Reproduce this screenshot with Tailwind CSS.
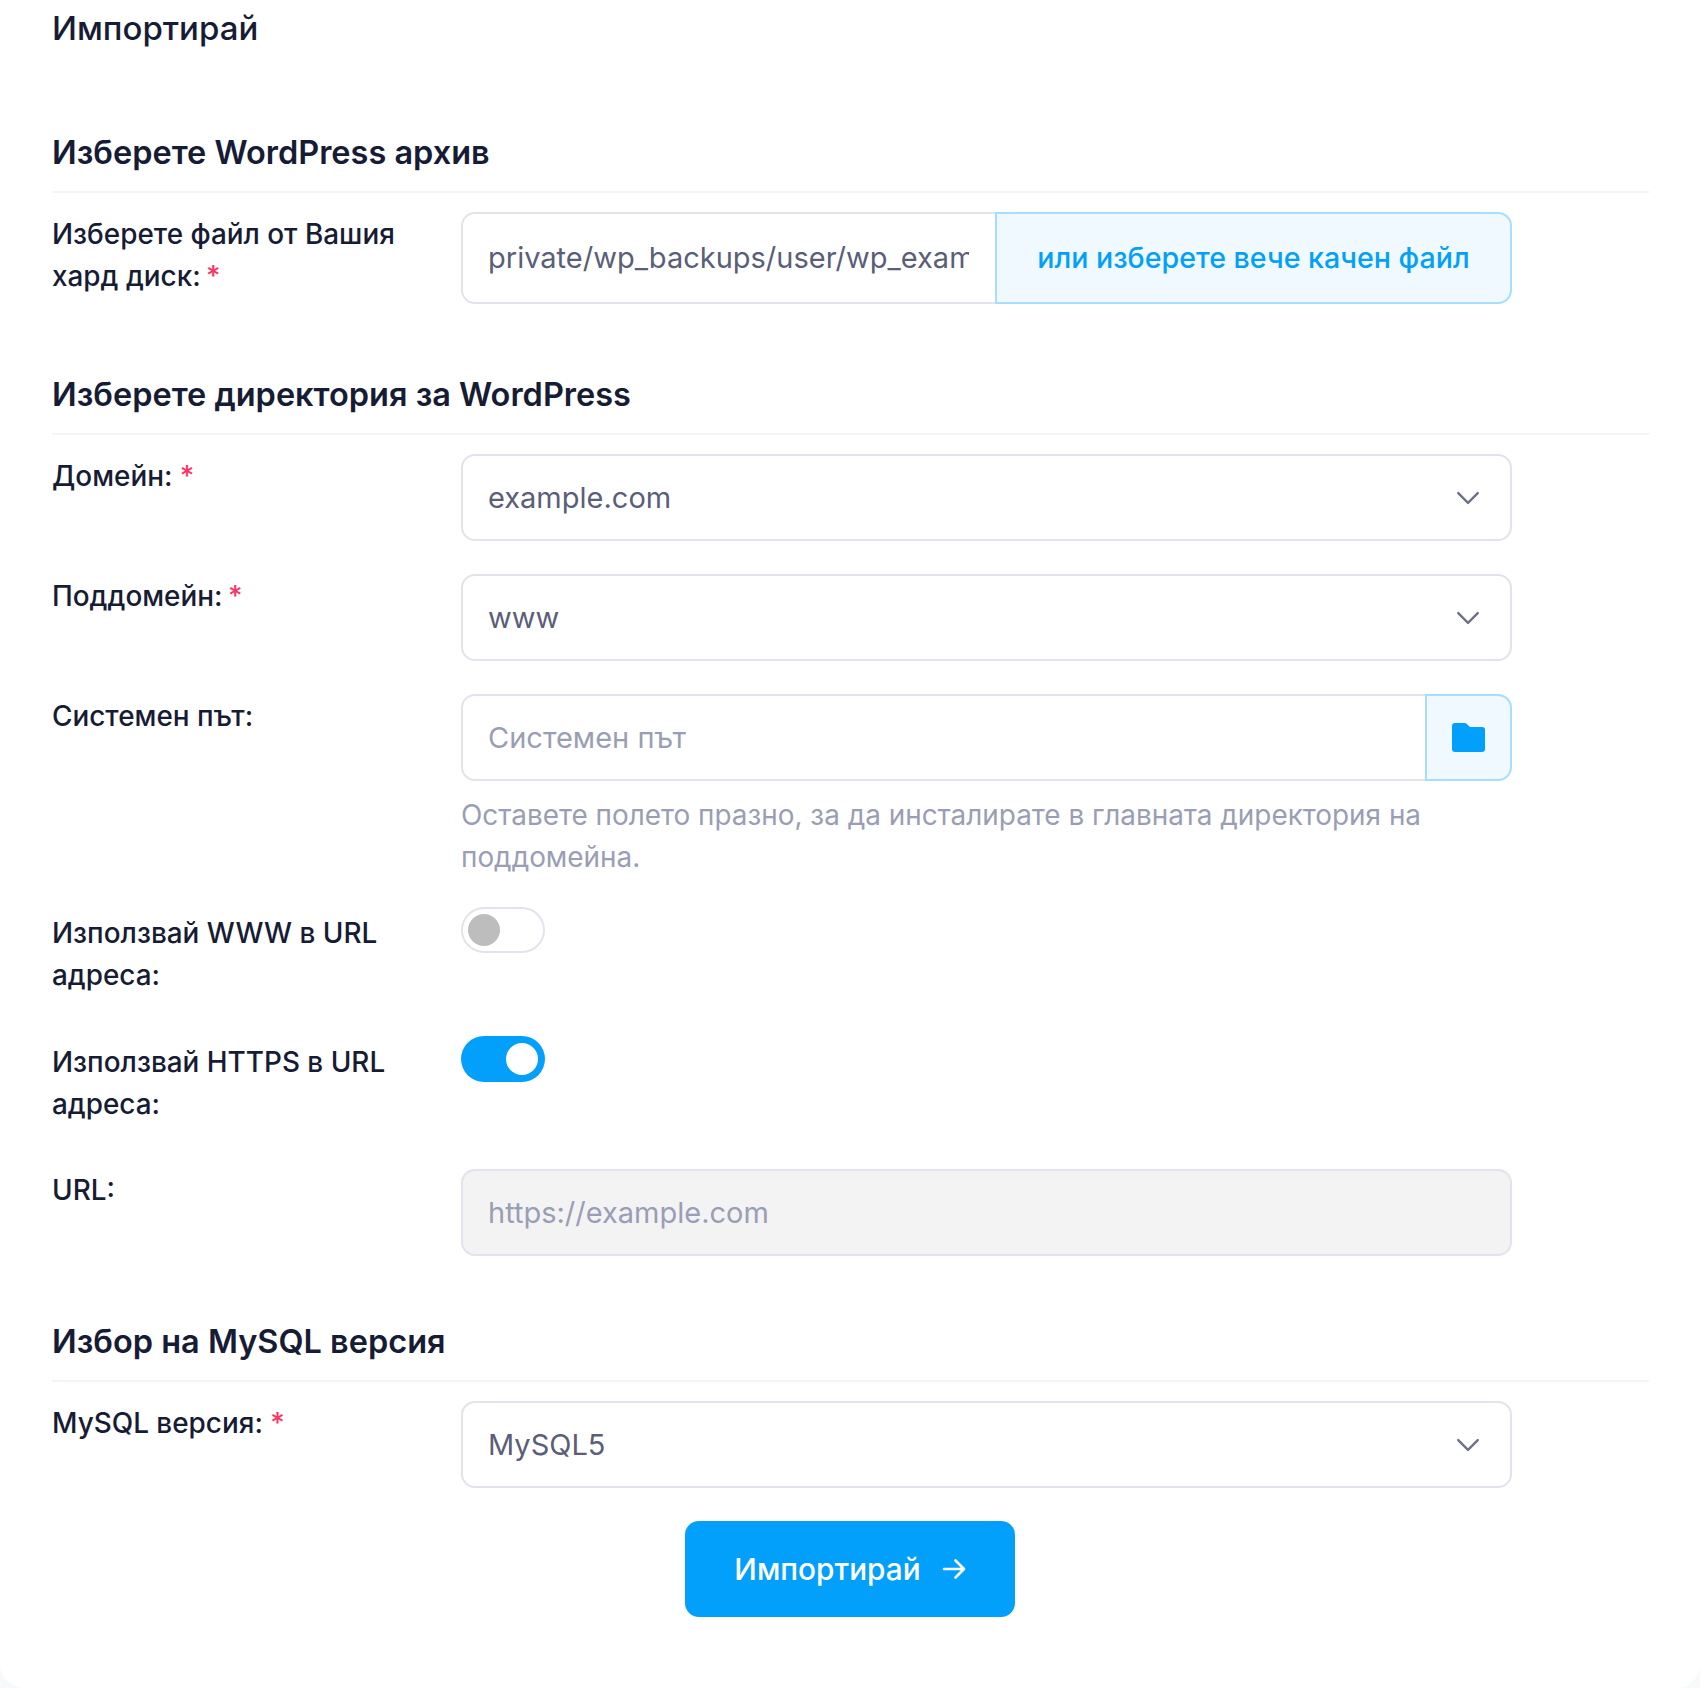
<!doctype html>
<html lang="bg">
<head>
<meta charset="utf-8">
<script src="https://cdn.jsdelivr.net/npm/@tailwindcss/browser@4"></script>
</head>
<body class="bg-[#f7f9fb] font-['Inter',sans-serif] text-[#171c35]">
<main class="h-[1688px] w-[1700px] rounded-b-[24px] bg-white pl-[52px] pr-[51px] text-[27.9px] font-medium leading-[42px]">
  <h1 class="h-[58px] pt-[7px] text-[33px] font-medium leading-[42px]">Импортирай</h1>

  <h2 class="mt-[74px] border-b-2 border-[#f3f4f6] pb-[17px] text-[32.5px] font-semibold leading-[42px]">Изберете WordPress архив</h2>
  <div class="mt-[19px] flex">
    <label class="w-[409px] pr-[40px] pt-[1px]">Изберете файл от Вашия хард диск: <span class="-ml-[2px] text-[#ff3366]">*</span></label>
    <div class="flex h-[92px] w-[1051px]">
      <div class="flex min-w-0 flex-1 items-center rounded-l-[14px] border-2 border-r-0 border-[#e1e4ec] pl-[25px] pr-[26px] text-[29px] font-normal text-[#5a5e78]"><span class="overflow-hidden whitespace-nowrap">private/wp_backups/user/wp_example.tar.gz</span></div>
      <button class="w-[517px] rounded-r-[14px] border-2 border-[#a6deff] bg-[#f0f9ff] text-[28.6px] font-medium text-[#03a0fb]">или изберете вече качен файл</button>
    </div>
  </div>

  <h2 class="mt-[70px] border-b-2 border-[#f3f4f6] pb-[17px] text-[32.5px] font-semibold leading-[42px]">Изберете директория за WordPress</h2>
  <div class="mt-[19px] flex">
    <label class="w-[409px] pt-[1px]">Домейн: <span class="text-[#ff3366]">*</span></label>
    <div class="flex h-[87px] w-[1051px] items-center justify-between rounded-[14px] border-2 border-[#e1e4ec] pl-[25px] pr-[29px] text-[29px] font-normal text-[#5a5e78]">example.com
      <svg class="h-[26px] w-[26px]" viewBox="0 0 24 24" fill="none" stroke="#6d7189" stroke-width="2.2" stroke-linecap="round" stroke-linejoin="round"><path d="M3 7.5l9 9 9-9"/></svg>
    </div>
  </div>
  <div class="mt-[33px] flex">
    <label class="w-[409px] pt-[1px]">Поддомейн: <span class="-ml-[2px] text-[#ff3366]">*</span></label>
    <div class="flex h-[87px] w-[1051px] items-center justify-between rounded-[14px] border-2 border-[#e1e4ec] pl-[25px] pr-[29px] text-[29px] font-normal text-[#5a5e78]">www
      <svg class="h-[26px] w-[26px]" viewBox="0 0 24 24" fill="none" stroke="#6d7189" stroke-width="2.2" stroke-linecap="round" stroke-linejoin="round"><path d="M3 7.5l9 9 9-9"/></svg>
    </div>
  </div>
  <div class="mt-[33px] flex">
    <label class="w-[409px] pt-[1px]">Системен път:</label>
    <div class="w-[1051px]">
      <div class="flex h-[87px]">
        <div class="flex flex-1 items-center rounded-l-[14px] border-2 border-r-0 border-[#e1e4ec] pl-[25px] text-[29px] font-normal text-[#9a9eb5]">Системен път</div>
        <button class="flex w-[87px] items-center justify-center rounded-r-[14px] border-2 border-[#a6deff] bg-[#f0f9ff]">
          <svg class="h-[29px] w-[33px]" viewBox="0 0 33 29" fill="#03a0fb"><path d="M3 0h9.500c1 0 1.800.4 2.400 1.100L18 4h12a3 3 0 0 1 3 3v19a3 3 0 0 1-3 3H3a3 3 0 0 1-3-3V3a3 3 0 0 1 3-3z"/></svg>
        </button>
      </div>
      <p class="mt-[13px] text-[27.9px] font-normal text-[#9a9eb5]">Оставете полето празно, за да инсталирате в главната директория на поддомейна.</p>
    </div>
  </div>
  <div class="mt-[29px] flex">
    <label class="mt-[4px] w-[409px] pr-[40px] pt-[1px]">Използвай WWW в URL адреса:</label>
    <span class="flex h-[46px] w-[84px] items-center rounded-full border-2 border-[#e1e4ec] bg-white pl-[5px]"><span class="h-[32px] w-[32px] rounded-full bg-[#bdbdbd]"></span></span>
  </div>
  <div class="mt-[40px] flex">
    <label class="mt-[4px] w-[409px] pr-[40px] pt-[1px]">Използвай HTTPS в URL адреса:</label>
    <span class="flex h-[46px] w-[84px] items-center justify-end rounded-full bg-[#03a0fb] pr-[7px]"><span class="h-[32px] w-[32px] rounded-full bg-white"></span></span>
  </div>
  <div class="mt-[44px] flex">
    <label class="w-[409px]">URL:</label>
    <div class="flex h-[87px] w-[1051px] items-center rounded-[14px] border-2 border-[#e1e4ec] bg-[#f3f3f4] pl-[25px] text-[29px] font-normal text-[#9a9eb5]">https://example.com</div>
  </div>

  <h2 class="mt-[65px] border-b-2 border-[#f3f4f6] pb-[17px] text-[32.5px] font-semibold leading-[42px]">Избор на MySQL версия</h2>
  <div class="mt-[19px] flex">
    <label class="w-[409px] pt-[1px]">MySQL версия: <span class="text-[#ff3366]">*</span></label>
    <div class="flex h-[87px] w-[1051px] items-center justify-between rounded-[14px] border-2 border-[#e1e4ec] pl-[25px] pr-[29px] text-[29px] font-normal text-[#5a5e78]">MySQL5
      <svg class="h-[26px] w-[26px]" viewBox="0 0 24 24" fill="none" stroke="#6d7189" stroke-width="2.2" stroke-linecap="round" stroke-linejoin="round"><path d="M3 7.5l9 9 9-9"/></svg>
    </div>
  </div>
  <div class="mt-[33px] flex justify-center pr-[1px]">
    <button class="flex h-[96px] w-[330px] items-center justify-center gap-[21px] rounded-[14px] bg-[#03a0fb] text-[29.8px] font-[450] text-white">Импортирай
      <svg class="h-[24px] w-[24px]" viewBox="0 0 24 24" fill="none" stroke="#fff" stroke-width="2.600" stroke-linecap="round" stroke-linejoin="round"><path d="M2 12h20M13.500 3.500L22 12l-8.500 8.500"/></svg>
    </button>
  </div>
</main>
</body>
</html>
